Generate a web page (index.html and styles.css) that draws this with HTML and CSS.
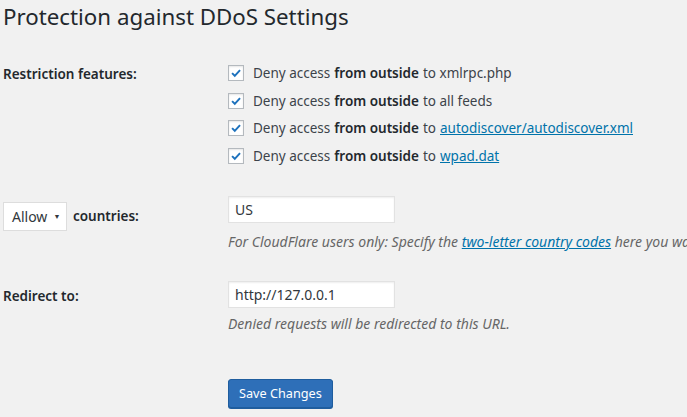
FILE: index.html
```html
<!DOCTYPE html>
<html>
<head>
<meta charset="utf-8">
<link rel="stylesheet" href="styles.css">
</head>
<body>
<div class="wrap">
  <h1 class="title">Protection against DDoS Settings</h1>
  <div class="row row-features">
    <div class="label">Restriction features:</div>
    <div class="field checks">
      <label class="check"><span class="box"><svg viewBox="0 0 16 16" width="16" height="16"><path d="M3.5 8.2 L6.6 11.2 L12.6 4.6" fill="none" stroke="#1e72bd" stroke-width="2.2"/></svg></span>Deny access <b>from outside</b> to xmlrpc.php</label>
      <label class="check"><span class="box"><svg viewBox="0 0 16 16" width="16" height="16"><path d="M3.5 8.2 L6.6 11.2 L12.6 4.6" fill="none" stroke="#1e72bd" stroke-width="2.2"/></svg></span>Deny access <b>from outside</b> to all feeds</label>
      <label class="check"><span class="box"><svg viewBox="0 0 16 16" width="16" height="16"><path d="M3.5 8.2 L6.6 11.2 L12.6 4.6" fill="none" stroke="#1e72bd" stroke-width="2.2"/></svg></span>Deny access <b>from outside</b> to <a href="#">autodiscover/autodiscover.xml</a></label>
      <label class="check"><span class="box"><svg viewBox="0 0 16 16" width="16" height="16"><path d="M3.5 8.2 L6.6 11.2 L12.6 4.6" fill="none" stroke="#1e72bd" stroke-width="2.2"/></svg></span>Deny access <b>from outside</b> to <a href="#">wpad.dat</a></label>
    </div>
  </div>
  <div class="row row-countries">
    <div class="label label-select">
      <span class="select">Allow <span class="arrow">▼</span></span>
      <span>countries:</span>
    </div>
    <div class="field">
      <div class="input">US</div>
      <p class="desc desc-first">For CloudFlare users only: Specify the <a href="#">two-letter country codes</a> here you want to allow or deny access.</p>
    </div>
  </div>
  <div class="row row-redirect">
    <div class="label label-redirect">Redirect to:</div>
    <div class="field">
      <div class="input">http://127.0.0.1</div>
      <p class="desc">Denied requests will be redirected to this URL.</p>
    </div>
  </div>
  <div class="submit">
    <button class="button">Save Changes</button>
  </div>
</div>
</body>
</html>
```
FILE: styles.css
```css
html, body {
  margin: 0;
  padding: 0;
  background: #f1f1f1;
  overflow: hidden;
}
body {
  font-family: "Noto Sans", "Open Sans", sans-serif;
  font-size: 13.5px;
  color: #23282d;
  width: 687px;
  height: 417px;
}
.wrap {
  padding-left: 3px;
  white-space: nowrap;
}
.title {
  margin: 0;
  padding-top: 2px;
  font-size: 22.3px;
  font-weight: 400;
  line-height: 29px;
  color: #23282d;
}
.row {
  display: grid;
  grid-template-columns: 225px 1fr;
}
.label {
  font-weight: 600;
  color: #23282d;
}
.row-features {
  margin-top: 32px;
}
.row-features .label {
  line-height: 20px;
  padding-top: 1px;
}
.checks {
  display: flex;
  flex-direction: column;
  gap: 7.6px;
}
.check {
  display: flex;
  align-items: center;
  height: 20px;
  color: #3c434a;
}
.check b {
  font-weight: 600;
  color: #23282d;
  margin: 0 4px;
}
.box {
  width: 14px;
  height: 14px;
  border: 1px solid #b4b9be;
  background: #fff;
  margin-right: 9px;
  box-shadow: inset 0 1px 2px rgba(0,0,0,0.1);
  display: flex;
  align-items: center;
  justify-content: center;
}
.box svg {
  width: 14px;
  height: 14px;
}
a {
  color: #0073aa;
  text-decoration: underline;
  margin-left: 4px;
}
.desc a { margin: 0; }
.row-countries {
  margin-top: 30px;
}
.label-select {
  display: flex;
  align-items: center;
  gap: 6px;
  padding-top: 6px;
  height: 29px;
}
.select {
  display: inline-flex;
  align-items: center;
  height: 27px;
  padding: 0 6px 0 8px;
  background: #fff;
  border: 1px solid #ddd;
  font-weight: 400;
  font-size: 14px;
  color: #32373c;
  gap: 6px;
  width: 48px;
}
.arrow {
  font-size: 7px;
}
.input {
  width: 155px;
  height: 25px;
  line-height: 25px;
  padding: 0 4px 0 6px;
  background: #fff;
  border: 1px solid #e2e2e2;
  box-shadow: inset 0 1px 2px rgba(0,0,0,0.07);
  color: #32373c;
  font-size: 14px;
}
.desc {
  margin: 6px 0 0;
  font-style: italic;
  font-size: 14px;
  line-height: 20px;
  color: #666;
}
.desc-first {
  margin-top: 9px;
}
.row-redirect {
  margin-top: 29px;
}
.label-redirect {
  padding-top: 5px;
  line-height: 20px;
}
.submit {
  padding-left: 225px;
  margin-top: 45px;
}
.button {
  font-family: inherit;
  font-size: 12.7px;
  color: #fff;
  background: #2e6fb8;
  border: 1px solid #1f5d9e;
  border-radius: 3px;
  height: 29px;
  padding: 0 10px;
  box-shadow: 0 1px 0 #1f5d9e;
}
```
